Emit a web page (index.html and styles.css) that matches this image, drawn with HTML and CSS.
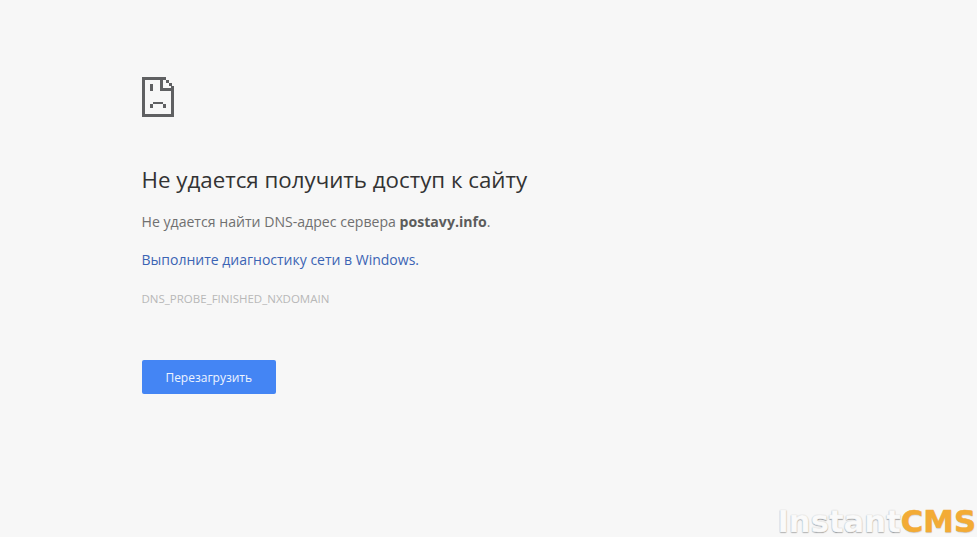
FILE: index.html
```html
<!DOCTYPE html>
<html lang="ru">
<head>
<meta charset="utf-8">
<title>postavy.info</title>
<link rel="stylesheet" href="styles.css">
</head>
<body>
<main class="page">
  <svg class="icon" width="32" height="40" viewBox="0 0 32 40" shape-rendering="crispEdges" aria-hidden="true">
    <path fill="#5f6062" d="M0 0h21v3H3v34h26V14h3v26H0zM18 3h3v8h11v3H18zM21 0h3v3h-3zM24 3h3v3h-3zM27 6h3v3h-3zM29 9h3v2h-3zM8 7h3v7H8zM11 25h10v2H11zM8 27h3v4H8zM21 27h3v4h-3z"/>
  </svg>
  <h1 class="title">Не удается получить доступ к сайту</h1>
  <p class="message">Не удается найти DNS-адрес сервера <strong>postavy.info</strong>.</p>
  <p class="diagnose"><a href="#">Выполните диагностику сети в Windows.</a></p>
  <p class="code">DNS_PROBE_FINISHED_NXDOMAIN</p>
  <button class="reload" type="button">Перезагрузить</button>
</main>
<div class="watermark"><span class="wm-a">Instant</span><span class="wm-b">CMS</span></div>
</body>
</html>
```
FILE: styles.css
```css
html, body {
  margin: 0;
  height: 100%;
}
body {
  background: #f7f7f7;
  font-family: "Open Sans", "Noto Sans", sans-serif;
  overflow: hidden;
  position: relative;
}
.page {
  display: flex;
  flex-direction: column;
  align-items: flex-start;
  padding: 77px 0 0 141.5px;
}
.icon {
  display: block;
  margin-left: 0.5px;
}
.title {
  margin: 48px 0 0;
  font-size: 22.3px;
  font-weight: 400;
  line-height: 30px;
  color: #333;
}
.message {
  margin: 17px 0 0;
  font-size: 14.1px;
  line-height: 20px;
  color: #707070;
}
.message strong {
  font-weight: 700;
  color: #5c5c5c;
}
.diagnose {
  margin: 18px 0 0;
  font-size: 14px;
  line-height: 20px;
}
.diagnose a {
  color: #3b64b4;
  text-decoration: none;
}
.code {
  margin: 20px 0 0;
  font-size: 11.5px;
  line-height: 18px;
  color: #b8b8b8;
}
.reload {
  margin-top: 52px;
  width: 134.5px;
  height: 34px;
  border: 0;
  border-radius: 2px;
  background: #4485f4;
  color: #eef4ff;
  font-family: inherit;
  font-size: 12px;
  padding: 0;
}
.watermark {
  position: absolute;
  right: 1px;
  bottom: 0;
  font-family: "DejaVu Sans", sans-serif;
  font-weight: 700;
  font-size: 30.7px;
  line-height: 30px;
  white-space: nowrap;
}
.wm-a {
  color: #fafafa;
  -webkit-text-stroke: 0.5px #f4f4f4;
  text-shadow: 0 1px 1px #999, 0 0 1px #999;
}
.wm-b {
  color: #f3ab35;
  -webkit-text-stroke: 0.5px #f3ab35;
  text-shadow: 0 1px 1px #c9c9c9;
}
```
